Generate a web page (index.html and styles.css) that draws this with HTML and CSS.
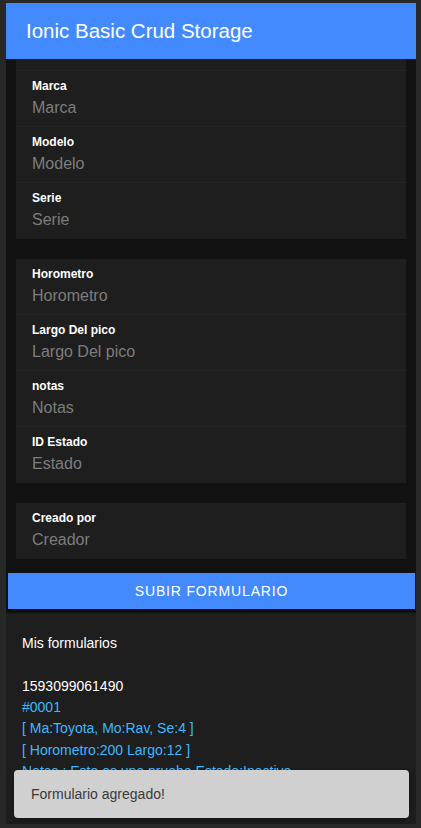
FILE: index.html
```html
<!DOCTYPE html>
<html lang="es">
<head>
<meta charset="utf-8">
<title>Ionic Basic Crud Storage</title>
<link rel="stylesheet" href="styles.css">
</head>
<body>
<div class="app">
  <header class="toolbar">
    <h1 class="title">Ionic Basic Crud Storage</h1>
  </header>
  <main class="content">
    <div class="cards">
      <div class="card">
        <div class="stub"></div>
        <div class="item"><label class="label">Marca</label><input class="input" placeholder="Marca"></div>
        <div class="item"><label class="label">Modelo</label><input class="input" placeholder="Modelo"></div>
        <div class="item"><label class="label">Serie</label><input class="input" placeholder="Serie"></div>
      </div>
      <div class="card">
        <div class="item"><label class="label">Horometro</label><input class="input" placeholder="Horometro"></div>
        <div class="item"><label class="label">Largo Del pico</label><input class="input" placeholder="Largo Del pico"></div>
        <div class="item"><label class="label">notas</label><input class="input" placeholder="Notas"></div>
        <div class="item"><label class="label">ID Estado</label><input class="input" placeholder="Estado"></div>
      </div>
      <div class="card">
        <div class="item"><label class="label">Creado por</label><input class="input" placeholder="Creador"></div>
      </div>
    </div>
    <button class="submit">SUBIR FORMULARIO</button>
    <section class="list">
      <div class="list-title">Mis formularios</div>
      <div class="entry">
        <div class="entry-id">1593099061490</div>
        <div class="entry-info">#0001</div>
        <div class="entry-info">[ Ma:Toyota, Mo:Rav, Se:4 ]</div>
        <div class="entry-info">[ Horometro:200 Largo:12 ]</div>
        <div class="entry-info">Notas : Esto es una prueba Estado:Inactivo</div>
      </div>
    </section>
  </main>
  <div class="toast">Formulario agregado!</div>
</div>
</body>
</html>
```
FILE: styles.css
```css
html, body {
  margin: 0;
  padding: 0;
}
body {
  background: #282828;
  font-family: "Liberation Sans", Arial, sans-serif;
}
.app {
  margin: 3px 5px 0 6px;
  height: 821px;
  background: #121212;
  display: flex;
  flex-direction: column;
  position: relative;
  overflow: hidden;
}
.toolbar {
  flex: none;
  height: 56px;
  background: #448aff;
  display: flex;
  align-items: center;
  padding-left: 20px;
}
.title {
  margin: 0;
  color: #ffffff;
  font-size: 20.5px;
  font-weight: normal;
}
.content {
  flex: 1;
  display: flex;
  flex-direction: column;
  overflow: hidden;
}
.cards {
  padding: 0 10px;
  display: flex;
  flex-direction: column;
  gap: 20px;
}
.card {
  background: #1e1e1e;
}
.stub {
  height: 11px;
  border-bottom: 1px solid #242424;
}
.item {
  height: 56px;
  box-sizing: border-box;
  padding: 8px 16px 0;
  border-bottom: 1px solid #242424;
}
.card .item:last-child {
  border-bottom-color: #1e1e1e;
}
.label {
  display: block;
  color: #ffffff;
  font-size: 12px;
  font-weight: bold;
  line-height: 14px;
}
.input {
  display: block;
  width: 100%;
  margin: 4px 0 0;
  padding: 0;
  height: 21px;
  border: none;
  outline: none;
  background: transparent;
  color: #ffffff;
  font-family: inherit;
  font-size: 16px;
  line-height: 21px;
}
.input::placeholder {
  color: #7d7d7d;
  opacity: 1;
}
.submit {
  flex: none;
  margin: 14px 1px 0 2px;
  height: 36px;
  border: none;
  border-radius: 0;
  background: #448aff;
  color: #ffffff;
  font-family: inherit;
  font-size: 14px;
  letter-spacing: 0.84px;
  padding: 0;
  box-shadow: 0 2px 2px rgba(0, 0, 0, 0.3);
}
.list {
  flex: 1;
  margin-top: 4px;
  background: #1e1e1e;
  padding: 20px 16px;
  font-size: 14px;
  line-height: 21.33px;
  color: #ffffff;
}
.list-title {
  margin-bottom: 21.33px;
}
.entry-info {
  color: #3db8ff;
}
.toast {
  position: absolute;
  left: 8px;
  right: 7px;
  bottom: 6px;
  height: 48px;
  box-sizing: border-box;
  padding-left: 17px;
  display: flex;
  align-items: center;
  background: #d0d0d0;
  color: #3a3a3a;
  font-size: 14px;
  border-radius: 4px;
  box-shadow: 0 3px 5px -1px rgba(0, 0, 0, 0.2), 0 6px 10px 0 rgba(0, 0, 0, 0.14);
}
```
